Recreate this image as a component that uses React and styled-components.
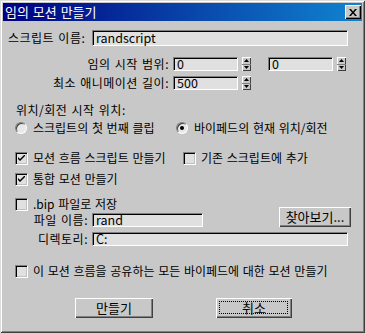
import React from 'react';
import styled, { createGlobalStyle } from 'styled-components';

const BG = '#c8c8c8';
const FONT = `"Noto Sans CJK KR", "Liberation Sans", sans-serif`;

const Global = createGlobalStyle`
  html, body { margin: 0; padding: 0; background: ${BG}; }
  * { box-sizing: border-box; }
`;

const Window = styled.div`
  width: 365px;
  height: 333px;
  padding: 3px;
  background: ${BG};
  box-shadow: inset 1px 1px 0 #dcdcdc, inset -1px -1px 0 #404040,
    inset 2px 2px 0 #ffffff, inset -2px -2px 0 #808080;
  display: flex;
  flex-direction: column;
  font-family: ${FONT};
  font-size: 12px;
  word-spacing: 1px;
  color: #000;
`;

const TitleBar = styled.div`
  height: 18px;
  display: flex;
  align-items: center;
  justify-content: space-between;
  padding: 0 1px 0 2px;
  background: linear-gradient(to right, #000080, #1084d0);
  color: #fff;
  font-size: 13px;
  line-height: 18px;
`;

const CloseBtn = styled.div`
  width: 16px;
  height: 14px;
  background: ${BG};
  display: flex;
  align-items: center;
  justify-content: center;
  box-shadow: inset 1px 1px 0 #fff, inset -1px -1px 0 #000, inset -2px -2px 0 #808080;
`;

const Body = styled.div`
  display: flex;
  flex-direction: column;
  padding-left: 5px;
`;

const Row = styled.div`
  display: flex;
  align-items: center;
  height: ${p => p.$h || 14}px;
  margin-top: ${p => p.$mt || 0}px;
  padding-left: ${p => p.$pl || 0}px;
  line-height: 14px;
  white-space: nowrap;
`;

const Label = styled.span`
  display: inline-block;
  width: ${p => (p.$w ? `${p.$w}px` : 'auto')};
  text-align: ${p => p.$align || 'left'};
  margin-right: ${p => p.$mr || 0}px;
  letter-spacing: 0.5px;
  flex-shrink: 0;
`;

const Edit = styled.div`
  width: ${p => p.$w}px;
  height: ${p => p.$h || 14}px;
  background: #e0e0e0;
  border-style: solid;
  border-width: 1px;
  border-color: #808080 #ffffff #ffffff #808080;
  box-shadow: inset 1px 1px 0 #000;
  padding-left: 3px;
  display: flex;
  align-items: center;
  font-size: 12.5px;
  line-height: 12px;
  margin-left: ${p => p.$ml || 0}px;
  flex-shrink: 0;
`;

const Spin = styled.div`
  width: 9px;
  height: 14px;
  margin-left: ${p => p.$ml || 4}px;
  display: flex;
  flex-direction: column;
  background: ${BG};
  box-shadow: inset 1px 1px 0 #fff, inset -1px -1px 0 #404040;
`;

const SpinHalf = styled.div`
  flex: 1;
  display: flex;
  align-items: center;
  justify-content: center;
  border-bottom: ${p => (p.$top ? '1px solid #808080' : 'none')};
`;

const Spinner = ({ ml }) => (
  <Spin $ml={ml}>
    <SpinHalf $top>
      <svg width="5" height="3" viewBox="0 0 5 3"><path d="M2.5 0 L5 3 L0 3 Z" fill="#000" /></svg>
    </SpinHalf>
    <SpinHalf>
      <svg width="5" height="3" viewBox="0 0 5 3"><path d="M0 0 L5 0 L2.5 3 Z" fill="#000" /></svg>
    </SpinHalf>
  </Spin>
);

const Item = styled.div`
  display: flex;
  align-items: center;
  width: ${p => (p.$w ? `${p.$w}px` : 'auto')};
  flex-shrink: 0;
`;

const Box = styled.div`
  width: 13px;
  height: 13px;
  margin-right: 5px;
  background: #e0e0e0;
  border-style: solid;
  border-width: 1px;
  border-color: #808080 #ffffff #ffffff #808080;
  box-shadow: inset 1px 1px 0 #000, inset -1px -1px 0 #c0c0c0;
  display: flex;
  align-items: center;
  justify-content: center;
  flex-shrink: 0;
`;

const Check = ({ checked, w, children }) => (
  <Item $w={w}>
    <Box>
      {checked && (
        <svg width="7" height="7" viewBox="0 0 7 7">
          <path d="M0 2 L0 4 L2 6 L7 1 L7 -1 L2 4 Z" fill="#000" />
        </svg>
      )}
    </Box>
    <span>{children}</span>
  </Item>
);

const RadioCircle = styled.div`
  width: 12px;
  height: 12px;
  margin-right: 6px;
  border-radius: 50%;
  background: #e8e8e8;
  border: 1px solid;
  border-color: #808080 #ffffff #ffffff #808080;
  box-shadow: inset 1px 1px 0 #404040;
  display: flex;
  align-items: center;
  justify-content: center;
  flex-shrink: 0;
`;

const Dot = styled.div`
  width: 4px;
  height: 4px;
  border-radius: 50%;
  background: #000;
`;

const Radio = ({ checked, w, children }) => (
  <Item $w={w}>
    <RadioCircle>{checked && <Dot />}</RadioCircle>
    <span>{children}</span>
  </Item>
);

const Button = styled.div`
  width: ${p => p.$w}px;
  height: 20px;
  margin-left: ${p => p.$ml || 0}px;
  background: ${BG};
  box-shadow: inset 1px 1px 0 #fff, inset -1px -1px 0 #404040, inset -2px -2px 0 #808080;
  display: flex;
  align-items: center;
  justify-content: center;
  position: relative;
  flex-shrink: 0;
  font-size: 13px;
  line-height: 14px;
`;

const Focus = styled.div`
  position: absolute;
  left: 3px;
  top: 3px;
  right: 4px;
  bottom: 4px;
  border: 1px dotted #000;
`;

const BipBlock = styled.div`
  display: flex;
  align-items: flex-end;
  margin-top: 11px;
`;

const BipLeft = styled.div`
  display: flex;
  flex-direction: column;
  width: 271px;
`;

const Buttons = styled.div`
  display: flex;
  margin-top: 20px;
  padding-left: 67px;
`;

export default function App() {
  return (
    <>
      <Global />
      <Window>
        <TitleBar>
          <span>임의 모션 만들기</span>
          <CloseBtn>
            <svg width="8" height="7" viewBox="0 0 8 7">
              <path d="M0 0 L2 0 L4 2.5 L6 0 L8 0 L5 3.5 L8 7 L6 7 L4 4.5 L2 7 L0 7 L3 3.5 Z" fill="#000" />
            </svg>
          </CloseBtn>
        </TitleBar>
        <Body>
          <Row $mt={9} $h={16}>
            <Label $w={84}>스크립트 이름:</Label>
            <Edit $w={256} $h={16}>randscript</Edit>
          </Row>
          <Row $mt={11}>
            <Label $w={161} $align="right" $mr={4}>임의 시작 범위:</Label>
            <Edit $w={65}>0</Edit>
            <Spinner ml={4} />
            <Edit $w={65} $ml={17}>0</Edit>
            <Spinner ml={4} />
          </Row>
          <Row $mt={5}>
            <Label $w={161} $align="right" $mr={4}>최소 애니메이션 길이:</Label>
            <Edit $w={65}>500</Edit>
            <Spinner ml={4} />
          </Row>
          <Row $mt={13} $pl={8}>
            <Label>위치/회전 시작 위치:</Label>
          </Row>
          <Row $mt={4} $pl={7}>
            <Radio w={161}>스크립트의 첫 번째 클립</Radio>
            <Radio checked>바이페드의 현재 위치/회전</Radio>
          </Row>
          <Row $mt={16} $pl={7}>
            <Check checked w={168}>모션 흐름 스크립트 만들기</Check>
            <Check>기존 스크립트에 추가</Check>
          </Row>
          <Row $mt={7} $pl={7}>
            <Check checked>통합 모션 만들기</Check>
          </Row>
          <BipBlock>
            <BipLeft>
              <Row $pl={7}>
                <Check>.bip 파일로 저장</Check>
              </Row>
              <Row $mt={2}>
                <Label $w={80} $align="right" $mr={4}>파일 이름:</Label>
                <Edit $w={111}>rand</Edit>
              </Row>
            </BipLeft>
            <Button $w={72}>찾아보기...</Button>
          </BipBlock>
          <Row $mt={5}>
            <Label $w={80} $align="right" $mr={4}>디렉토리:</Label>
            <Edit $w={256}>C:</Edit>
          </Row>
          <Row $mt={18} $pl={7}>
            <Check>이 모션 흐름을 공유하는 모든 바이페드에 대한 모션 만들기</Check>
          </Row>
          <Buttons>
            <Button $w={78}>만들기</Button>
            <Button $w={76} $ml={63}>
              취소
              <Focus />
            </Button>
          </Buttons>
        </Body>
      </Window>
    </>
  );
}
